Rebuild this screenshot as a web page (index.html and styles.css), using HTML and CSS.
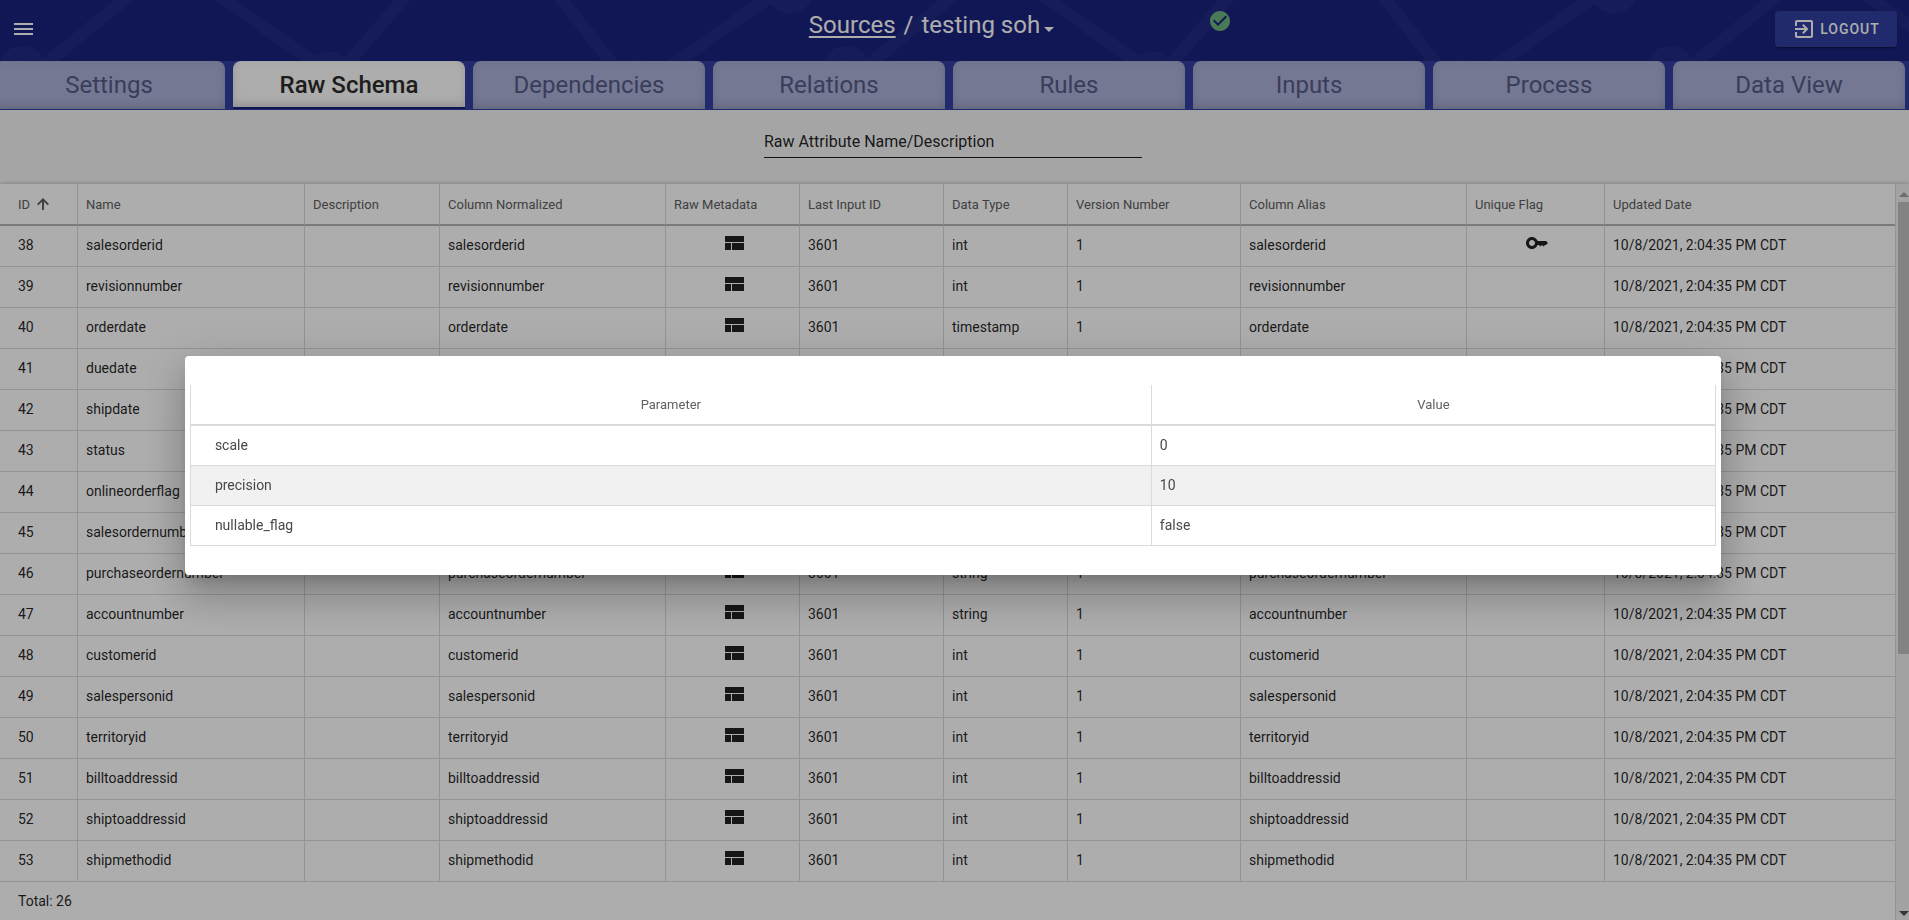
FILE: index.html
```html
<!DOCTYPE html>
<html lang="en">
<head>
<meta charset="utf-8">
<title>Raw Schema</title>
<link rel="stylesheet" href="styles.css">
</head>
<body>
<svg width="0" height="0" class="defs" aria-hidden="true">
  <symbol id="meta" viewBox="0 0 24 24"><path d="M3 5h19v6H3zM3 12h6v7H3zM10 12h12v7H10z"/></symbol>
</svg>
<div class="app">
  <header class="topbar">
    <svg class="pattern" aria-hidden="true">
      <defs>
        <pattern id="net" width="824" height="61" patternUnits="userSpaceOnUse">
          <path fill="none" stroke="#212a82" stroke-width="12" d="M37 71L136-10M211-10L326 71M341 71L411-10M554-10L618 71M664 71L780-10"/>
          <g fill="#1e2780" stroke="#212a82" stroke-width="12">
            <circle cx="22" cy="70" r="18"/>
            <circle cx="329" cy="72" r="14"/>
            <circle cx="635" cy="84" r="18"/>
            <circle cx="790" cy="-11" r="18"/>
          </g>
        </pattern>
      </defs>
      <rect width="100%" height="100%" fill="url(#net)"/>
    </svg>
    <button class="menu" aria-label="Menu"><svg viewBox="0 0 24 24" width="24" height="24"><path d="M3 18h19v-2H3v2zm0-5h19v-2H3v2zm0-7v2h19V6H3z"/></svg></button>
    <nav class="crumbs"><a href="#">Sources</a><span class="slash">/</span><button class="picker">testing soh<svg viewBox="0 0 10 5" width="10" height="5"><path d="M0 0h10L5 5z"/></svg></button></nav>
    <svg class="status" viewBox="2 2 20 20" width="20" height="20" role="img" aria-label="Active"><path d="M12 2C6.480 2 2 6.480 2 12s4.480 10 10 10 10-4.480 10-10S17.520 2 12 2zm-2 15l-5-5 1.410-1.410L10 14.170l7.590-7.590L19 8l-9 9z"/></svg>
    <button class="logout"><svg viewBox="0 0 24 24" width="24" height="24"><path d="M10.090 15.590L11.500 17l5-5-5-5-1.410 1.410L12.670 11H3v2h9.670l-2.580 2.590zM19 3H5c-1.110 0-2 .9-2 2v4h2V5h14v14H5v-4H3v4c0 1.100.89 2 2 2h14c1.100 0 2-.9 2-2V5c0-1.100-.9-2-2-2z"/></svg>LOGOUT</button>
  </header>
  <nav class="tabs">
    <a href="#">Settings</a><a href="#" class="active" aria-current="page">Raw Schema</a><a href="#">Dependencies</a><a href="#">Relations</a><a href="#">Rules</a><a href="#">Inputs</a><a href="#">Process</a><a href="#">Data View</a>
  </nav>
  <div class="search"><input type="text" aria-label="Raw Attribute Name/Description" placeholder="Raw Attribute Name/Description"></div>
  <main class="panel">
    <div class="sheet">
      <table class="grid">
        <colgroup><col class="c-id"><col class="c-name"><col class="c-desc"><col class="c-norm"><col class="c-meta"><col class="c-input"><col class="c-type"><col class="c-ver"><col class="c-alias"><col class="c-flag"><col></colgroup>
        <thead><tr><th>ID<svg class="sort" viewBox="4 4 16 16" width="12" height="12"><path d="M4 12l1.800 1.800L10.700 8.900V20h2.600V8.900l4.900 4.900L20 12l-8-8-8 8z"/></svg></th><th>Name</th><th>Description</th><th>Column Normalized</th><th>Raw Metadata</th><th>Last Input ID</th><th>Data Type</th><th>Version Number</th><th>Column Alias</th><th>Unique Flag</th><th>Updated Date</th></tr></thead>
        <tbody id="rows"></tbody>
      </table>
      <p class="total">Total: 26</p>
    </div>
    <div class="scroll" aria-hidden="true"><i class="up"></i><i class="thumb"></i><i class="down"></i></div>
  </main>
</div>
<div class="scrim">
  <div class="dialog" role="dialog" aria-label="Raw metadata">
    <table class="params">
      <colgroup><col class="p-name"><col></colgroup>
      <thead><tr><th>Parameter</th><th>Value</th></tr></thead>
      <tbody>
        <tr><td>scale</td><td>0</td></tr>
        <tr><td>precision</td><td>10</td></tr>
        <tr><td>nullable_flag</td><td>false</td></tr>
      </tbody>
    </table>
  </div>
</div>
<script src="rows.js"></script>
</body>
</html>
```
FILE: rows.js
```js
const rows = [
  [38, 'salesorderid', 'int'], [39, 'revisionnumber', 'int'], [40, 'orderdate', 'timestamp'],
  [41, 'duedate', 'timestamp'], [42, 'shipdate', 'timestamp'], [43, 'status', 'int'],
  [44, 'onlineorderflag', 'boolean'], [45, 'salesordernumber', 'string'],
  [46, 'purchaseordernumber', 'string'], [47, 'accountnumber', 'string'],
  [48, 'customerid', 'int'], [49, 'salespersonid', 'int'], [50, 'territoryid', 'int'],
  [51, 'billtoaddressid', 'int'], [52, 'shiptoaddressid', 'int'], [53, 'shipmethodid', 'int']
];
const meta = '<svg class="meta" viewBox="2 5 20 14" width="20" height="14"><use href="#meta" width="24" height="24"/></svg>';
const key = '<svg class="key" viewBox="1 6 22 12" width="22" height="12"><path d="M12.650 10C11.830 7.670 9.610 6 7 6c-3.310 0-6 2.690-6 6s2.690 6 6 6c2.610 0 4.830-1.670 5.650-4H14l1.500 1.500L17 14l1.500 1.500L20 14h1l2-2-2-2h-8.350zM7 15c-1.650 0-3-1.350-3-3s1.350-3 3-3 3 1.350 3 3-1.350 3-3 3z"/></svg>';
document.getElementById('rows').innerHTML = rows.map(([id, name, type], i) =>
  `<tr><td>${id}</td><td>${name}</td><td></td><td>${name}</td><td class="icon">${meta}</td><td>3601</td><td>${type}</td><td>1</td><td>${name}</td><td class="icon">${i ? '' : key}</td><td>10/8/2021, 2:04:35 PM CDT</td></tr>`
).join('');
```
FILE: styles.css
```css
* { box-sizing: border-box; }
html, body { height: 100%; }
body { margin: 0; overflow: hidden; font-family: Roboto, sans-serif; font-size: 14px; color: rgba(0, 0, 0, .87); background: #f4f4f4; }
button { font: inherit; color: inherit; background: none; border: 0; padding: 0; }
svg { fill: currentColor; }
.defs { position: absolute; }
.app { height: 100%; display: flex; flex-direction: column; }

.topbar { position: relative; height: 61px; flex: none; background: #1a237e; color: #fff; }
.pattern { position: absolute; inset: 0; width: 100%; height: 100%; }
.menu { position: absolute; left: 11px; top: 17px; height: 24px; }
.crumbs { position: absolute; inset: 10px 0 auto; display: flex; justify-content: center; gap: 8px; padding-right: 46px; font-size: 24px; line-height: 30px; }
.crumbs a { color: inherit; text-underline-offset: 3px; text-decoration-thickness: 2px; }
.picker { display: flex; align-items: center; gap: 4px; }
.picker svg { margin-top: 8px; }
.status { position: absolute; top: 11px; left: calc(50% + 255px); color: #6cb47e; }
.logout { position: absolute; right: 12px; top: 11px; height: 36px; width: 122px; display: flex; align-items: center; justify-content: center; gap: 4px; border-radius: 4px; background: #303f9f; font-weight: 500; letter-spacing: 1px; box-shadow: 0 3px 1px -2px rgba(0,0,0,.2), 0 2px 2px rgba(0,0,0,.14), 0 1px 5px rgba(0,0,0,.12); }

.tabs { flex: none; display: flex; gap: 8px; height: 49px; padding-right: 4px; margin-left: -7px; background: #303f9f; border-bottom: 1px solid #303f9f; }
.tabs a { flex: 1; display: flex; align-items: center; justify-content: center; border-radius: 8px 8px 0 0; background: #acb2d9; color: #555b86; font-size: 24px; text-decoration: none; box-shadow: inset 0 -6px 12px -4px rgba(0,0,0,.16), inset 0 0 8px rgba(0,0,0,.06); }
.tabs .active { padding-top: 2px; background: #fff; color: #2b2b2b; font-weight: 500; border-bottom: 2px solid #1a237e; }

.search { flex: none; height: 74px; padding: 16px 3px 0 0; display: flex; justify-content: center; align-items: flex-start; }
.search input { width: 378px; height: 32px; border: 0; border-bottom: 1px solid #1c1c1c; background: none; padding: 0; font: 16px Roboto, sans-serif; outline: 0; }
.search input::placeholder { color: rgba(0,0,0,.87); opacity: 1; }

.panel { flex: 1; min-height: 0; display: flex; overflow: hidden; background: #fff; box-shadow: 0 0 4px rgba(0,0,0,.3); }
.sheet { flex: 1; border-right: 1px solid #dadada; }
table { width: 100%; border-collapse: separate; border-spacing: 0; table-layout: fixed; }
th { height: 42px; padding: 1px 8px 0; text-align: left; font-size: 13px; font-weight: 400; color: #606060; border-right: 1px solid #dadada; border-bottom: 2px solid #b4b4b4; white-space: nowrap; }
td { height: 41px; padding: 0 8px 2px; border-right: 1px solid #dadada; border-bottom: 1px solid #dadada; white-space: nowrap; }
.grid th:first-child, .grid td:first-child { padding-left: 18px; }
.grid th:last-child, .grid td:last-child { border-right: 0; }
.c-id { width: 78px; } .c-name { width: 227px; } .c-desc { width: 135px; } .c-norm { width: 226px; }
.c-meta { width: 134px; } .c-input { width: 144px; } .c-type { width: 124px; } .c-ver { width: 173px; }
.c-alias { width: 226px; } .c-flag { width: 138px; }
.sort { margin-left: 7px; vertical-align: -1px; color: #606060; }
td.icon { padding-left: 10px; }
.icon svg { display: block; margin: 0 auto 4px; }
.total { margin: 0; padding: 11px 18px; line-height: 16px; }
.scroll { flex: none; width: 13px; padding-left: 2px; background: #f1f1f1; display: flex; flex-direction: column; align-items: flex-end; }
.scroll i { display: block; }
.up, .down { border: 5px solid transparent; }
.up { border-bottom-color: #a0a0a0; border-top: 0; margin: 8px 0 5px; }
.thumb { width: 11px; height: 452px; background: #c1c1c1; }
.down { border-top-color: #505050; border-bottom: 0; margin: auto 0 4px; }

.scrim { position: fixed; inset: 0; padding: 11px 3px 0 0; display: flex; align-items: center; justify-content: center; background: rgba(0,0,0,.32); }
.dialog { width: 80.600%; padding: 29px 5px; background: #fff; border-radius: 4px; box-shadow: 0 11px 15px -7px rgba(0,0,0,.2), 0 24px 38px 3px rgba(0,0,0,.14), 0 9px 46px 8px rgba(0,0,0,.12); }
.params { border-left: 1px solid #dadada; color: #484848; }
.p-name { width: 63%; }
.params th { text-align: center; height: 41px; padding-top: 0; border-bottom-color: #dadada; }
.params td { height: 40px; padding-bottom: 2px; }
.params td:first-child { padding-left: 24px; }
.params tr:nth-child(2) td { background: #f1f1f1; }
```
